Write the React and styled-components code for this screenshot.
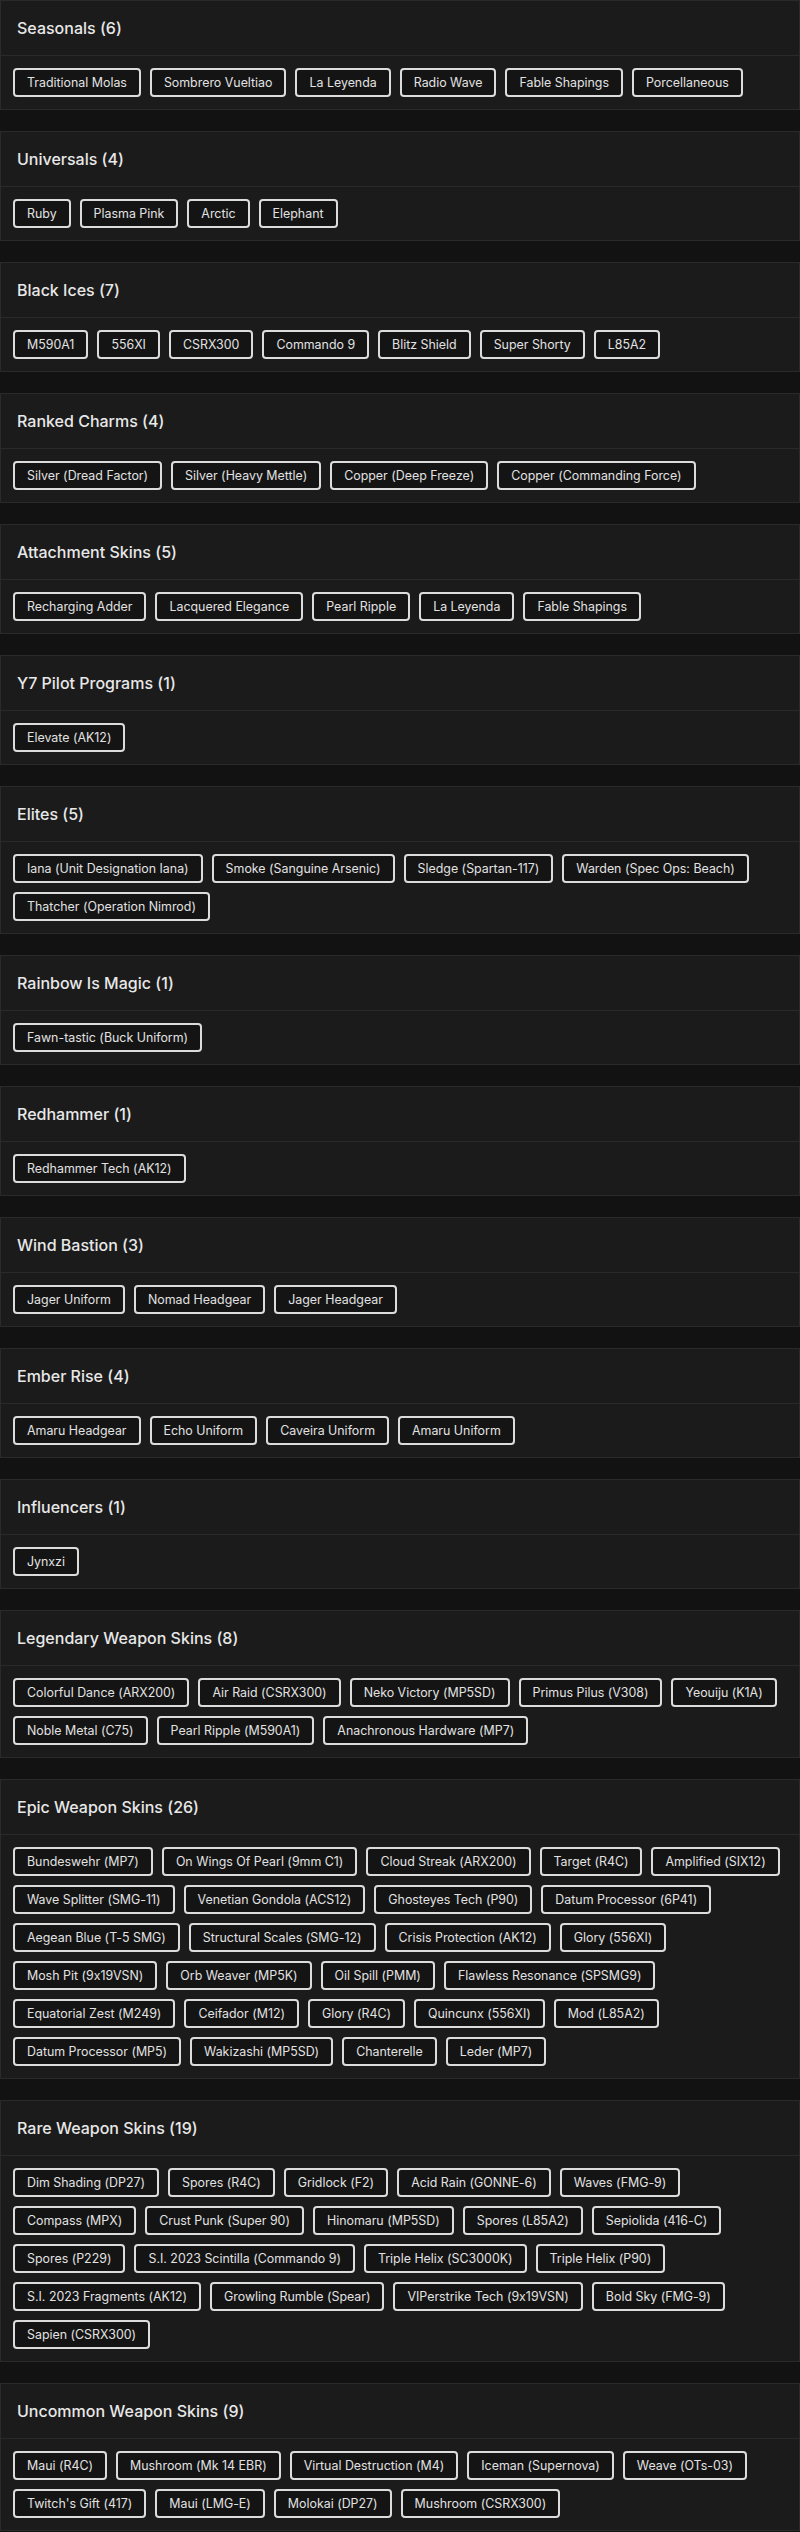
import React from "react";
import styled, { createGlobalStyle } from "styled-components";

const GlobalStyle = createGlobalStyle`
  html, body {
    margin: 0;
    padding: 0;
    background: #121212;
  }
  body {
    font-family: Inter, "Noto Sans", "DejaVu Sans", sans-serif;
    font-feature-settings: "calt" 0;
    color: #e4e4e4;
  }
`;

const sections = [
  ["Seasonals", ["Traditional Molas", "Sombrero Vueltiao", "La Leyenda", "Radio Wave", "Fable Shapings", "Porcellaneous"]],
  ["Universals", ["Ruby", "Plasma Pink", "Arctic", "Elephant"]],
  ["Black Ices", ["M590A1", "556XI", "CSRX300", "Commando 9", "Blitz Shield", "Super Shorty", "L85A2"]],
  ["Ranked Charms", ["Silver (Dread Factor)", "Silver (Heavy Mettle)", "Copper (Deep Freeze)", "Copper (Commanding Force)"]],
  ["Attachment Skins", ["Recharging Adder", "Lacquered Elegance", "Pearl Ripple", "La Leyenda", "Fable Shapings"]],
  ["Y7 Pilot Programs", ["Elevate (AK12)"]],
  ["Elites", ["Iana (Unit Designation Iana)", "Smoke (Sanguine Arsenic)", "Sledge (Spartan-117)", "Warden (Spec Ops: Beach)", "Thatcher (Operation Nimrod)"]],
  ["Rainbow Is Magic", ["Fawn-tastic (Buck Uniform)"]],
  ["Redhammer", ["Redhammer Tech (AK12)"]],
  ["Wind Bastion", ["Jager Uniform", "Nomad Headgear", "Jager Headgear"]],
  ["Ember Rise", ["Amaru Headgear", "Echo Uniform", "Caveira Uniform", "Amaru Uniform"]],
  ["Influencers", ["Jynxzi"]],
  ["Legendary Weapon Skins", [
    "Colorful Dance (ARX200)", "Air Raid (CSRX300)", "Neko Victory (MP5SD)", "Primus Pilus (V308)", "Yeouiju (K1A)",
    "Noble Metal (C75)", "Pearl Ripple (M590A1)", "Anachronous Hardware (MP7)",
  ]],
  ["Epic Weapon Skins", [
    "Bundeswehr (MP7)", "On Wings Of Pearl (9mm C1)", "Cloud Streak (ARX200)", "Target (R4C)", "Amplified (SIX12)",
    "Wave Splitter (SMG-11)", "Venetian Gondola (ACS12)", "Ghosteyes Tech (P90)", "Datum Processor (6P41)",
    "Aegean Blue (T-5 SMG)", "Structural Scales (SMG-12)", "Crisis Protection (AK12)", "Glory (556XI)",
    "Mosh Pit (9x19VSN)", "Orb Weaver (MP5K)", "Oil Spill (PMM)", "Flawless Resonance (SPSMG9)",
    "Equatorial Zest (M249)", "Ceifador (M12)", "Glory (R4C)", "Quincunx (556XI)", "Mod (L85A2)",
    "Datum Processor (MP5)", "Wakizashi (MP5SD)", "Chanterelle", "Leder (MP7)",
  ]],
  ["Rare Weapon Skins", [
    "Dim Shading (DP27)", "Spores (R4C)", "Gridlock (F2)", "Acid Rain (GONNE-6)", "Waves (FMG-9)",
    "Compass (MPX)", "Crust Punk (Super 90)", "Hinomaru (MP5SD)", "Spores (L85A2)", "Sepiolida (416-C)",
    "Spores (P229)", "S.I. 2023 Scintilla (Commando 9)", "Triple Helix (SC3000K)", "Triple Helix (P90)",
    "S.I. 2023 Fragments (AK12)", "Growling Rumble (Spear)", "VIPerstrike Tech (9x19VSN)", "Bold Sky (FMG-9)",
    "Sapien (CSRX300)",
  ]],
  ["Uncommon Weapon Skins", [
    "Maui (R4C)", "Mushroom (Mk 14 EBR)", "Virtual Destruction (M4)", "Iceman (Supernova)", "Weave (OTs-03)",
    "Twitch's Gift (417)", "Maui (LMG-E)", "Molokai (DP27)", "Mushroom (CSRX300)",
  ]],
];

const Page = styled.main`
  display: flex;
  flex-direction: column;
  gap: 21px;
  width: 800px;
  padding-bottom: 1px;
`;

const Card = styled.section`
  background: #1b1b1b;
  border: 1px solid #2a2a2a;
`;

const Header = styled.h2`
  margin: 0;
  height: 54px;
  padding: 0 16px;
  display: flex;
  align-items: center;
  border-bottom: 1px solid #2a2a2a;
  font-size: 16px;
  font-weight: 500;
  color: #e8e8e8;
`;

const ChipList = styled.div`
  display: flex;
  flex-wrap: wrap;
  gap: 9px 9px;
  padding: 12px;
`;

const Chip = styled.span`
  display: inline-flex;
  align-items: center;
  height: 29px;
  box-sizing: border-box;
  padding: 0 12px;
  border: 2px solid #dcdcdc;
  border-radius: 4px;
  background: #141414;
  font-size: 12.4px;
  color: #e2e2e2;
  white-space: nowrap;
`;

export default function App() {
  return (
    <>
      <GlobalStyle />
      <Page>
        {sections.map(([title, items]) => (
          <Card key={title}>
            <Header>
              {title} ({items.length})
            </Header>
            <ChipList>
              {items.map((item, i) => (
                <Chip key={i}>{item}</Chip>
              ))}
            </ChipList>
          </Card>
        ))}
      </Page>
    </>
  );
}
